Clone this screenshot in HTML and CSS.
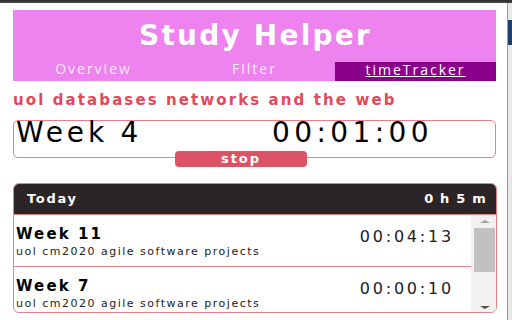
FILE: index.html
```html
<!DOCTYPE html>
<html lang="en">
<head>
    <meta charset="UTF-8">
    <meta name="viewport" content="width=device-width, initial-scale=1.0">
    <title>Study Helper</title>
    <link rel="stylesheet" href="styles.css">
</head>
<body>
    <div class="topbar"></div>
    <div class="window">
        <div class="popup">
            <div class="header">
                <h1 class="title">Study Helper</h1>
                <ul class="tabs">
                    <li><a href="#">Overview</a></li>
                    <li><a href="#">Filter</a></li>
                    <li class="active"><a href="#">timeTracker</a></li>
                </ul>
            </div>

            <h2 class="course">uol databases networks and the web</h2>

            <div class="timer">
                <span class="timer-name">Week 4</span>
                <span class="timer-clock">00:01:00</span>
            </div>
            <button class="btn-stop">stop</button>

            <div class="log">
                <div class="log-head">
                    <span>Today</span>
                    <span>0 h 5 m</span>
                </div>
                <div class="log-body">
                    <div class="log-list">
                        <div class="entry">
                            <div>
                                <h4>Week 11</h4>
                                <p>uol cm2020 agile software projects</p>
                            </div>
                            <span class="entry-time">00:04:13</span>
                        </div>
                        <div class="entry">
                            <div>
                                <h4>Week 7</h4>
                                <p>uol cm2020 agile software projects</p>
                            </div>
                            <span class="entry-time">00:00:10</span>
                        </div>
                    </div>
                    <div class="scrollbar">
                        <div class="arrow up"></div>
                        <div class="thumb"></div>
                        <div class="track"></div>
                        <div class="arrow down"></div>
                    </div>
                </div>
            </div>
        </div>
        <div class="edge"><div class="edge-tab"></div></div>
    </div>
</body>
</html>
```

FILE: styles.css
```css
*{
    margin: 0;
    padding: 0;
    box-sizing: border-box;
}

body{
    width: 512px;
    height: 320px;
    overflow: hidden;
    background: #fff;
    font-family: "DejaVu Sans", Verdana, sans-serif;
}

.topbar{
    height: 3px;
    background: linear-gradient(#2a2a2a, #4a4a4a);
}

.window{
    display: flex;
    height: 317px;
    overflow: hidden;
}

.popup{
    width: 507px;
    padding: 7px 11px 0 13px;
}

.edge{
    width: 5px;
    border-left: 1px solid #9e9e9e;
    background: #e8e8e8;
}
.edge-tab{
    margin-top: 17px;
    height: 25px;
    background: #1d3f6d;
}

/* header */
.header{
    background-color: #ee82ee;
    height: 71px;
}
.title{
    text-align: center;
    color: white;
    font-size: 28px;
    letter-spacing: 2.2px;
    line-height: 51px;
    padding-left: 2px;
}
.tabs{
    display: grid;
    grid-template-columns: 1fr 1fr 1fr;
    list-style: none;
    height: 20px;
}
.tabs > li{
    text-align: center;
}
.tabs > li > a{
    display: block;
    height: 20px;
    padding-bottom: 4px;
    font-family: "Open Sans", sans-serif;
    font-size: 14px;
    line-height: 16px;
    letter-spacing: 2px;
    color: #fbeafb;
    text-decoration: none;
}
.tabs > li.active{
    background-color: #8b008b;
    margin-top: 1px;
}
.tabs > li.active > a{
    color: white;
    text-decoration: underline;
    height: 19px;
    line-height: 15px;
}

/* current timer */
.course{
    color: #e2495b;
    font-size: 15px;
    line-height: 16px;
    letter-spacing: 2.1px;
    margin: 11px 0 12px;
    white-space: nowrap;
}

.timer{
    display: flex;
    align-items: flex-start;
    border: 1px solid #e8808a;
    border-radius: 5px;
    padding: 0 3px 12px 2px;
    font-size: 28px;
    line-height: 24px;
    color: #000;
}
.timer-name{
    flex: 1;
    letter-spacing: 3.8px;
}
.timer-clock{
    letter-spacing: 4.4px;
    margin-right: 59px;
}

.btn-stop{
    display: block;
    width: 132px;
    height: 16px;
    margin: -7px 0 0 162px;
    border: none;
    border-radius: 4px;
    background-color: #db5466;
    color: white;
    font-family: "DejaVu Sans", Verdana, sans-serif;
    font-weight: bold;
    font-size: 13px;
    line-height: 16px;
    letter-spacing: 2px;
    cursor: pointer;
}

/* today's log */
.log{
    margin: 16px -1px 0 0;
    height: 130px;
    border: 1px solid #e8808a;
    border-radius: 6px;
    overflow: hidden;
}
.log-head{
    display: flex;
    justify-content: space-between;
    height: 31px;
    padding: 0 9px 0 13px;
    background-color: #2b2527;
    border-bottom: 1px solid #e8808a;
    color: white;
    font-weight: bold;
    font-size: 13px;
    line-height: 30px;
}
.log-head span:first-child{
    letter-spacing: 1.7px;
}
.log-head span:last-child{
    letter-spacing: 1.2px;
}
.log-body{
    display: flex;
    height: 97px;
}
.log-list{
    flex: 1;
    overflow: hidden;
}
.entry{
    display: flex;
    justify-content: space-between;
    align-items: flex-start;
    padding: 11px 17px 8px 2px;
    border-bottom: 1px solid #e8808a;
}
.entry h4{
    font-size: 15px;
    line-height: 16px;
    letter-spacing: 2.1px;
    color: #000;
}
.entry p{
    margin-top: 3px;
    font-size: 11px;
    line-height: 13px;
    letter-spacing: 1.5px;
    color: #222;
    white-space: nowrap;
}
.entry-time{
    margin-top: 3px;
    font-size: 16px;
    line-height: 16px;
    letter-spacing: 2.8px;
    color: #1c1c28;
}

/* fake scrollbar like chrome */
.scrollbar{
    width: 25px;
    display: flex;
    flex-direction: column;
    background: #f1f1f1;
    padding: 0 1px 0 3px;
}
.arrow{
    height: 13px;
    display: flex;
    align-items: center;
    justify-content: center;
}
.arrow::after{
    content: "";
    width: 0;
    height: 0;
    border-left: 5px solid transparent;
    border-right: 5px solid transparent;
}
.arrow.up::after{
    border-bottom: 3px solid #a3a3a3;
}
.arrow.down::after{
    border-top: 3px solid #505050;
    margin-top: 4px;
}
.thumb{
    height: 44px;
    background: #c1c1c1;
}
.track{
    flex: 1;
}
```
